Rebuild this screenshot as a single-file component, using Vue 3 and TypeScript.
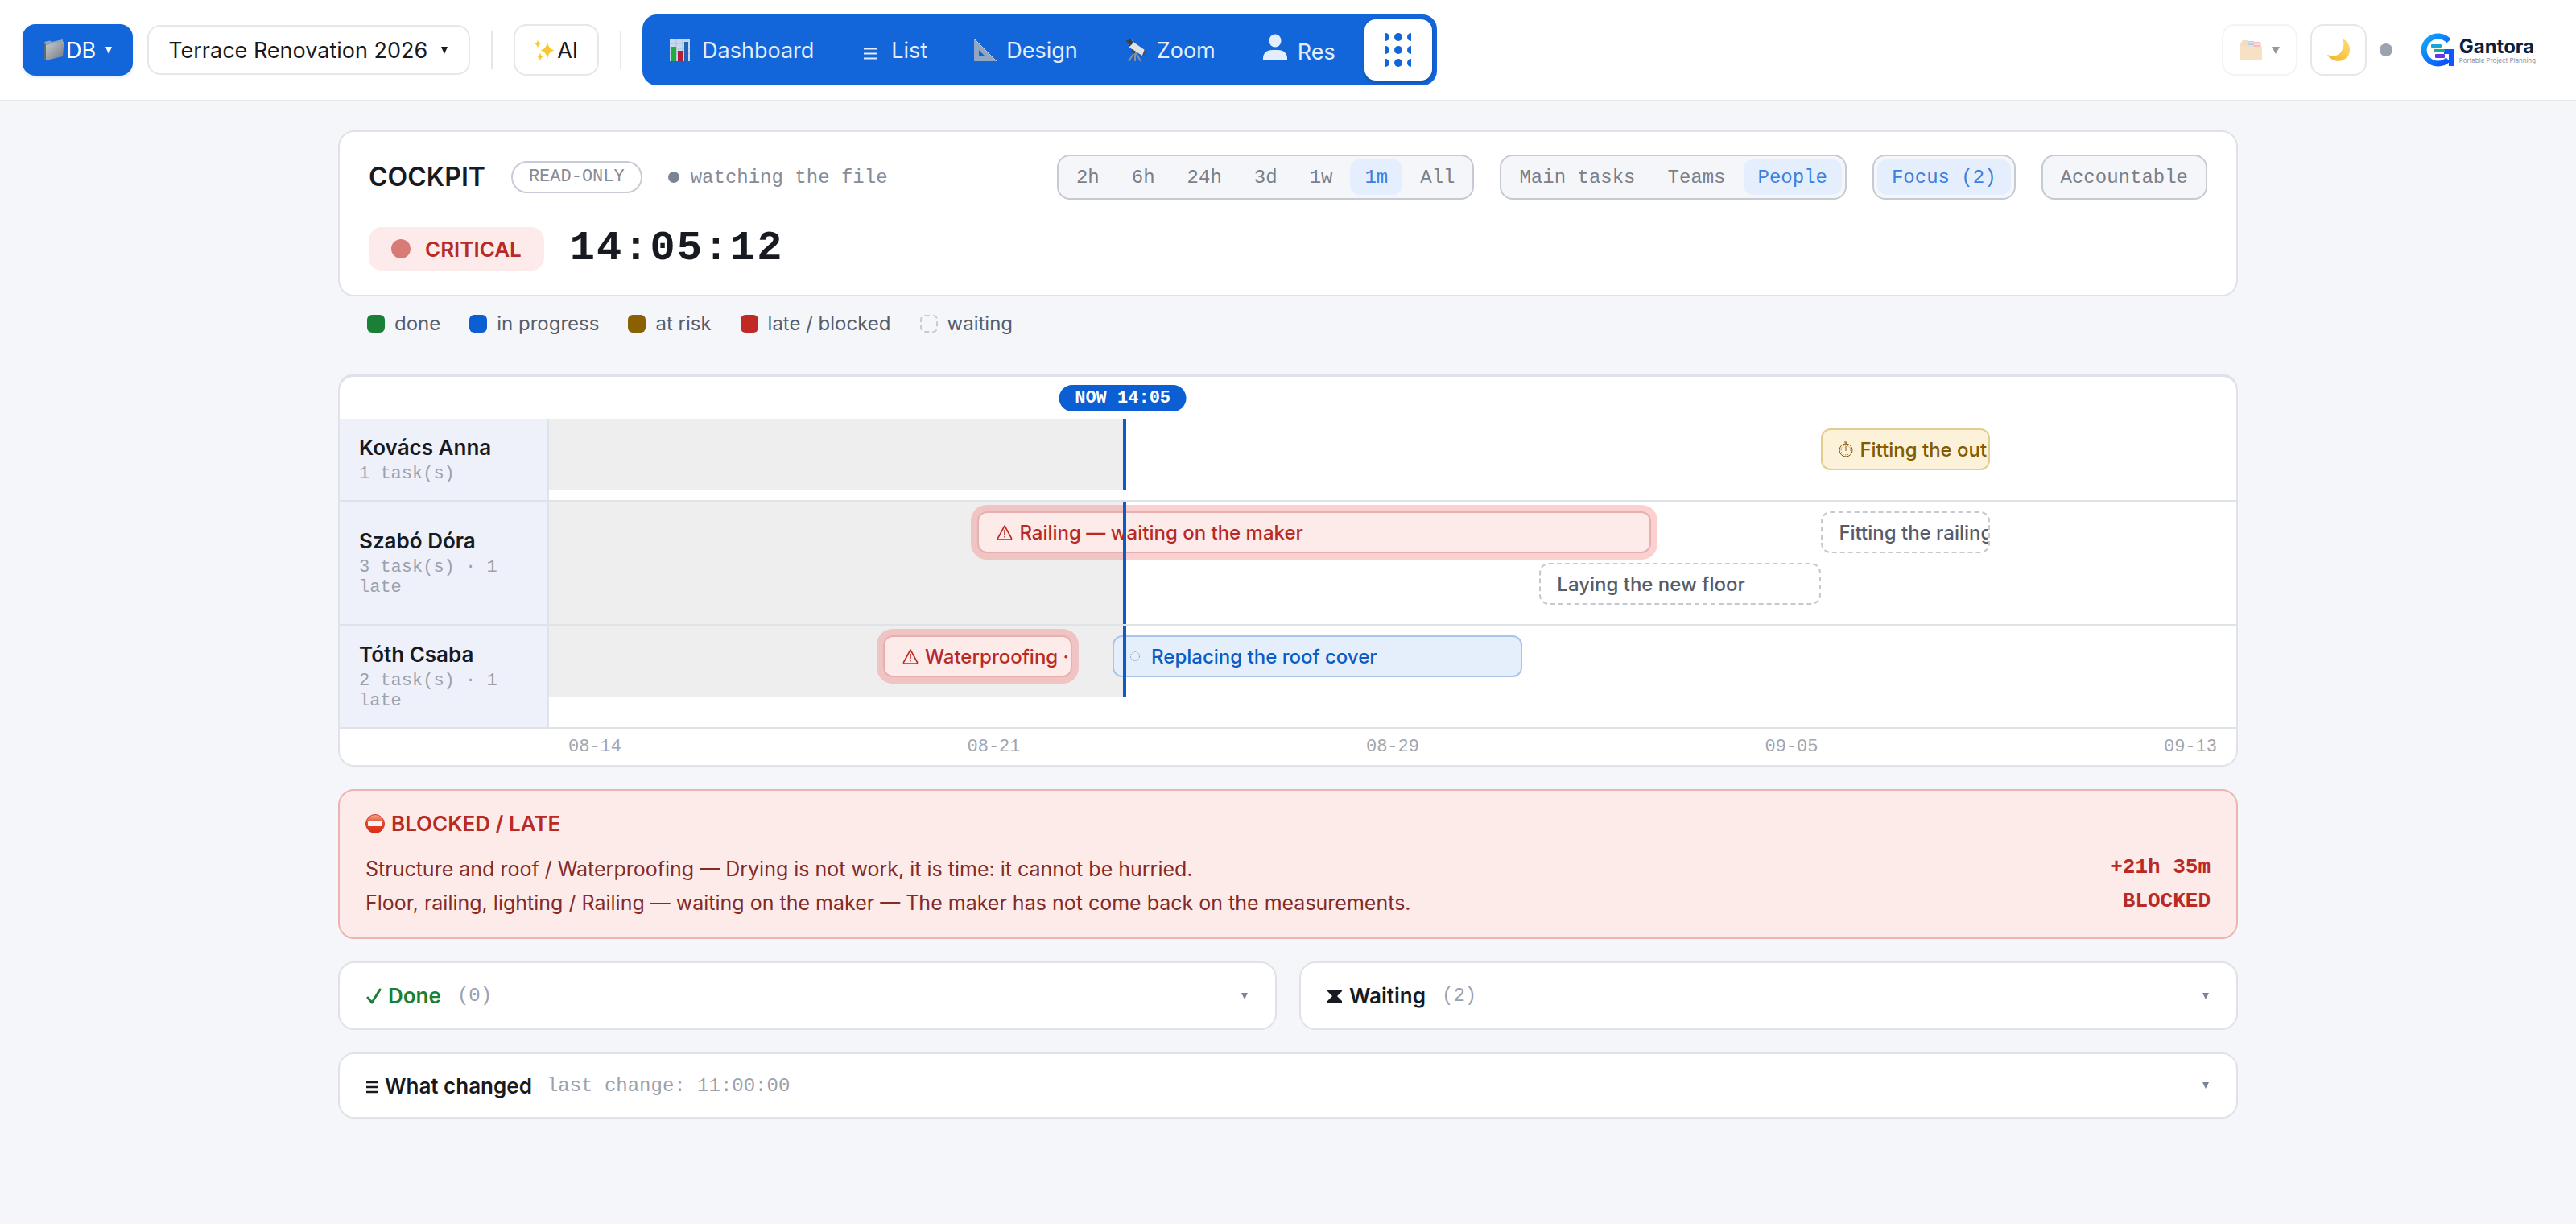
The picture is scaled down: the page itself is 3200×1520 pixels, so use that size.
<script setup lang="ts">
import { ref } from 'vue'

type Tone = 'late' | 'risk' | 'progress' | 'waiting'
interface Bar { label: string; tone: Tone; left: number; width: number; lane: number }
interface Row { name: string; note: string; lanes: number; bars: Bar[] }

const now = 34.1
const badge = 34
const project = ref('Terrace Renovation 2026')
const range = ref('1m')
const grouping = ref('People')

const nav = [
  { label: 'Dashboard', icon: 'chart' },
  { label: 'List', icon: 'list' },
  { label: 'Design', icon: 'ruler' },
  { label: 'Zoom', icon: 'scope' },
  { label: 'Res', icon: 'person' },
]
const ranges = ['2h', '6h', '24h', '3d', '1w', '1m', 'All']
const groupings = ['Main tasks', 'Teams', 'People']
const legend = [
  { label: 'done', cls: 'c-done' },
  { label: 'in progress', cls: 'c-progress' },
  { label: 'at risk', cls: 'c-risk' },
  { label: 'late / blocked', cls: 'c-late' },
  { label: 'waiting', cls: 'c-waiting' },
]
const rows: Row[] = [
  {
    name: 'Kovács Anna', note: '1 task(s)', lanes: 1,
    bars: [{ label: 'Fitting the out', tone: 'risk', left: 75.4, width: 10, lane: 0 }],
  },
  {
    name: 'Szabó Dóra', note: '3 task(s) · 1 late', lanes: 2,
    bars: [
      { label: 'Railing — waiting on the maker', tone: 'late', left: 25.4, width: 39.9, lane: 0 },
      { label: 'Fitting the railing', tone: 'waiting', left: 75.4, width: 10, lane: 0 },
      { label: 'Laying the new floor', tone: 'waiting', left: 58.7, width: 16.7, lane: 1 },
    ],
  },
  {
    name: 'Tóth Csaba', note: '2 task(s) · 1 late', lanes: 1,
    bars: [
      { label: 'Waterproofing ·', tone: 'late', left: 19.8, width: 11.2, lane: 0 },
      { label: 'Replacing the roof cover', tone: 'progress', left: 33.4, width: 24.3, lane: 0 },
    ],
  },
]
const ticks = ['08-14', '08-21', '08-29', '09-05', '09-13']
const issues = [
  { text: 'Structure and roof / Waterproofing — Drying is not work, it is time: it cannot be hurried.', value: '+21h 35m' },
  { text: 'Floor, railing, lighting / Railing — waiting on the maker — The maker has not come back on the measurements.', value: 'BLOCKED' },
]
</script>

<template>
  <div class="page">
    <header class="topbar">
      <button class="btn primary" type="button">
        <svg class="emoji" width="26" height="28" viewBox="0 0 26 28" aria-hidden="true">
          <defs>
            <linearGradient id="fold" x1="0" y1="0" x2="1" y2="1">
              <stop offset="0" stop-color="#c9cdd1" /><stop offset="1" stop-color="#70777f" />
            </linearGradient>
          </defs>
          <path d="M1 4 8 2.500l2 1.500L24 1v4L3 8z" fill="#8ea7b8" />
          <path d="M1 5v21l2 1V8z" fill="#5c6a76" />
          <path d="M3 8 25.500 3.500 24 22 3 27z" fill="url(#fold)" />
        </svg>
        <span>DB</span>
        <svg class="caret" width="8" height="9" viewBox="0 0 8 9" aria-hidden="true"><path d="M0 0h8L4 9z" /></svg>
      </button>
      <label class="project">
        <select v-model="project" aria-label="Project">
          <option>Terrace Renovation 2026</option>
        </select>
        <svg class="caret" width="8" height="9" viewBox="0 0 8 9" aria-hidden="true"><path d="M0 0h8L4 9z" /></svg>
      </label>
      <span class="sep"></span>
      <button class="btn" type="button">
        <svg class="emoji" width="26" height="28" viewBox="0 0 26 28" aria-hidden="true">
          <g fill="#fbc62f">
            <path d="M16 4q1.500 9 8.500 10.500Q17.500 16 16 25 14.500 16 7.500 14.500 14.500 13 16 4z" />
            <path d="M4 1q.6 4.500 3.500 5.500Q4.600 7.500 4 12 3.400 7.500.5 6.500 3.400 5.500 4 1z" />
            <path d="M7 17q.6 4.500 3.500 5.500Q7.600 23.500 7 28 6.400 23.500 3.500 22.500 6.400 21.500 7 17z" />
          </g>
        </svg>
        <span>AI</span>
      </button>
      <span class="sep"></span>

      <nav class="nav">
        <a v-for="item in nav" :key="item.label" href="#" :class="item.icon">
          <svg v-if="item.icon === 'chart'" width="28" height="30" viewBox="0 0 28 30" aria-hidden="true">
            <path d="M0 1h25v28H0z" fill="#c5d9ee" />
            <path d="M0 7h25M0 13h25M0 19h25M8 1v28M16 1v28" stroke="#a6bfda" fill="none" />
            <path d="M2 11h6v18H2z" fill="#1fae3c" /><path d="M10 16h6v13h-6z" fill="#b51f33" /><path d="M18 5h5v24h-5z" fill="#2263b8" />
          </svg>
          <svg v-else-if="item.icon === 'list'" width="26" height="30" viewBox="0 0 26 30" aria-hidden="true">
            <path d="M4 13.500h16M4 19.500h16M4 25.500h16" stroke="#e3edfb" stroke-width="2" />
          </svg>
          <svg v-else-if="item.icon === 'ruler'" width="28" height="30" viewBox="0 0 28 30" aria-hidden="true">
            <path fill-rule="evenodd" d="M0 1 28 29H0zM6 15v8h8z" fill="#93a6c1" />
            <path d="M0 1 28 29" stroke="#c4cedc" stroke-width="1" />
          </svg>
          <svg v-else-if="item.icon === 'scope'" width="28" height="30" viewBox="0 0 28 30" aria-hidden="true">
            <path d="M13 17 5 29M13 17l7 12M13 17v12" stroke="#8b9099" stroke-width="2" fill="none" />
            <path d="m3 3 5-2 4 5 13 9-3 7L6 12z" fill="#dfe3e8" />
            <path d="m2 3 6-2 3 5-5 5z" fill="#3b3f47" /><path d="m22 22 3-8 2 2-3 7z" fill="#4e535b" />
            <path d="m9 14 5 3-2 3-4-3z" fill="#454a52" />
          </svg>
          <svg v-else width="32" height="34" viewBox="0 0 32 34" aria-hidden="true">
            <ellipse cx="16" cy="8.500" rx="7.500" ry="8" fill="#e3edfb" />
            <path d="M1 33v-3c0-6 5-10 11-10h8c6 0 11 4 11 10v3z" fill="#e3edfb" />
          </svg>
          <span>{{ item.label }}</span>
        </a>
        <button class="grid-btn" type="button" aria-label="All views">
          <svg width="32" height="42" viewBox="0 0 32 42" fill="#1366d9" aria-hidden="true">
            <template v-for="y in [5, 21, 37]" :key="y">
              <circle v-for="x in [0, 16, 32]" :key="x" :cx="x" :cy="y" r="5" />
            </template>
          </svg>
        </button>
      </nav>

      <div class="right">
        <button class="btn faded" type="button" aria-label="Files">
          <svg width="28" height="28" viewBox="0 0 28 28" aria-hidden="true">
            <path d="M1 6 4 2h6l3 4h14v6H1z" fill="#e6b679" />
            <path d="M11 3h7v5h-7z" fill="#5f8fe8" /><path d="M18 4h8v6h-8z" fill="#e86a6a" />
            <path d="M11 5h7M18 7h8" stroke="#fff" />
            <path d="M0 9h12l2 1h14v17H0z" fill="#edbd80" />
          </svg>
          <svg class="caret" width="10" height="9" viewBox="0 0 10 9" aria-hidden="true"><path d="M0 0h10L5 9z" /></svg>
        </button>
        <button class="btn moon" type="button" aria-label="Dark mode">
          <svg width="30" height="30" viewBox="0 0 30 30" aria-hidden="true">
            <defs>
              <linearGradient id="moon" x1="0" y1="1" x2="1" y2="0">
                <stop offset="0" stop-color="#f2b320" /><stop offset="1" stop-color="#fde07a" />
              </linearGradient>
            </defs>
            <path d="M20 1c8 4 11 12 8 19-4 10-19 13-27 1 8 3 15 1 18-5 3-5 3-10 1-15z" fill="url(#moon)" />
          </svg>
        </button>
        <span class="dot"></span>
        <a class="logo" href="#" aria-label="Gantora">
          <svg width="44" height="42" viewBox="0 0 44 42" aria-hidden="true">
            <defs>
              <linearGradient id="ring" x1="0" y1="0" x2="1" y2="1">
                <stop offset="0" stop-color="#12a8f5" /><stop offset="1" stop-color="#0a4cff" />
              </linearGradient>
            </defs>
            <path d="M36 10A17.500 17 0 1 0 35 33" fill="none" stroke="url(#ring)" stroke-width="7" />
            <path d="M30 20h13v21h-7V26h-6z" fill="#0d59ff" />
            <rect x="14" y="14" width="13" height="4" rx="1" fill="#18a5d8" />
            <rect x="17" y="20" width="14" height="4" rx="1" fill="#16b08a" />
            <rect x="19" y="26" width="12" height="5" rx="1" fill="#6a35e8" />
          </svg>
          <span class="wordmark"><b>Gantora</b><small>Portable Project Planning</small></span>
        </a>
      </div>
    </header>

    <main class="content">
      <section class="card cockpit">
        <div class="line">
          <h1>COCKPIT</h1>
          <span class="pill">READ-ONLY</span>
          <span class="watch"><i></i>watching the file</span>
          <div class="filters">
            <div class="seg" role="group" aria-label="Range">
              <button v-for="r in ranges" :key="r" type="button" :class="{ on: r === range }" @click="range = r">{{ r }}</button>
            </div>
            <div class="seg" role="group" aria-label="Grouping">
              <button v-for="g in groupings" :key="g" type="button" :class="{ on: g === grouping }" @click="grouping = g">{{ g }}</button>
            </div>
            <div class="seg"><button type="button" class="on">Focus (2)</button></div>
            <div class="seg"><button type="button">Accountable</button></div>
          </div>
        </div>
        <div class="line status">
          <span class="critical"><i></i>CRITICAL</span>
          <time class="clock">14:05:12</time>
        </div>
      </section>

      <ul class="legend">
        <li v-for="l in legend" :key="l.label"><i :class="l.cls"></i>{{ l.label }}</li>
      </ul>

      <section class="card gantt">
        <div class="head">
          <div class="head-track"><span class="now-badge" :style="{ left: badge + '%' }">NOW 14:05</span></div>
        </div>
        <div v-for="row in rows" :key="row.name" class="row">
          <div class="who"><strong>{{ row.name }}</strong><span>{{ row.note }}</span></div>
          <div class="track">
            <div class="lanes" :class="{ two: row.lanes === 2 }">
              <div class="past" :style="{ width: now + '%' }"></div>
              <div
                v-for="bar in row.bars" :key="bar.label" class="bar"
                :class="[bar.tone, { second: bar.lane === 1 }]"
                :style="{ left: bar.left + '%', width: bar.width + '%' }"
              >
                <svg v-if="bar.tone === 'late'" width="22" height="20" viewBox="-2 0 22 20" aria-hidden="true">
                  <path d="M10 2 18.500 17.500q.3 1.500-1 1.500H2.500q-1.300 0-1-1.500z" fill="none" stroke="currentColor" stroke-width="1.600" stroke-linejoin="round" />
                  <path d="M10 7v6M10 14.700v1.800" stroke="currentColor" stroke-width="1.600" />
                </svg>
                <svg v-else-if="bar.tone === 'risk'" width="18" height="20" viewBox="0 0 18 20" aria-hidden="true">
                  <g fill="none" stroke="currentColor">
                    <circle cx="9" cy="11" r="8" /><path d="M9 1v3M7 1h4M9 6v6M15 3l2 2" />
                    <circle cx="9" cy="11" r="6" stroke-dasharray="1 2" />
                  </g>
                </svg>
                <svg v-else-if="bar.tone === 'progress'" class="wide" width="14" height="18" viewBox="0 0 14 18" aria-hidden="true">
                  <circle cx="6" cy="9" r="5.500" fill="none" stroke="#7ea6dc" stroke-dasharray="2 1" />
                </svg>
                <span>{{ bar.label }}</span>
              </div>
              <div class="now" :style="{ left: now + '%' }"></div>
            </div>
          </div>
        </div>
        <div class="axis"><span v-for="t in ticks" :key="t">{{ t }}</span></div>
      </section>

      <section class="card blocked">
        <h2>
          <svg width="24" height="26" viewBox="0 0 24 26" aria-hidden="true">
            <defs>
              <linearGradient id="stop" x1="0" y1="0" x2="0" y2="1">
                <stop offset="0" stop-color="#f7a68d" /><stop offset=".45" stop-color="#e2492c" /><stop offset="1" stop-color="#e0290f" />
              </linearGradient>
            </defs>
            <circle cx="12" cy="13" r="11.500" fill="url(#stop)" stroke="#c93a22" />
            <rect x="3" y="10" width="18" height="6" rx="1" fill="#f4f4f4" />
          </svg>
          BLOCKED / LATE
        </h2>
        <p v-for="i in issues" :key="i.value"><span>{{ i.text }}</span><b>{{ i.value }}</b></p>
      </section>

      <div class="pair">
        <details class="card fold tall">
          <summary>
            <svg class="green" width="20" height="22" viewBox="0 0 20 22" aria-hidden="true"><path d="M3 13l5 6L18 3" fill="none" stroke="currentColor" stroke-width="3" stroke-linecap="round" stroke-linejoin="round" /></svg>
            <strong class="green">Done</strong><span class="count">(0)</span>
            <svg class="caret" width="8" height="8" viewBox="0 0 8 8" aria-hidden="true"><path d="M0 0h8L4 8z" /></svg>
          </summary>
        </details>
        <details class="card fold tall">
          <summary>
            <svg width="20" height="22" viewBox="0 0 20 22" aria-hidden="true"><path d="M1 3h18v2l-6 6 6 6v3H1v-3l6-6-6-6z" fill="currentColor" /></svg>
            <strong>Waiting</strong><span class="count">(2)</span>
            <svg class="caret" width="8" height="8" viewBox="0 0 8 8" aria-hidden="true"><path d="M0 0h8L4 8z" /></svg>
          </summary>
        </details>
      </div>

      <details class="card fold">
        <summary>
          <svg width="16" height="22" viewBox="0 0 16 22" aria-hidden="true"><path d="M1 7h15M1 13h15M1 19h15" stroke="currentColor" stroke-width="2.500" /></svg>
          <strong>What changed</strong><span class="changed">last change: 11:00:00</span>
          <svg class="caret" width="8" height="8" viewBox="0 0 8 8" aria-hidden="true"><path d="M0 0h8L4 8z" /></svg>
        </summary>
      </details>
    </main>
  </div>
</template>

<style>
body { background: #f4f6fa; }
</style>

<style scoped>
* { box-sizing: border-box; }
.page {
  min-height: 100vh;
  font-family: Inter, "Liberation Sans", sans-serif;
  font-size: 24px;
  color: #171a21;
  background: #f4f6fa;
}
button, select { font: inherit; color: inherit; margin: 0; }
a { text-decoration: none; color: inherit; }

.topbar {
  display: flex;
  align-items: center;
  gap: 18px;
  padding: 18px 50px 18px 28px;
  background: #fff;
  border-bottom: 2px solid #e3e6ea;
}
.btn {
  display: flex;
  align-items: center;
  height: 64px;
  padding: 0 24px;
  border: 2px solid #e5e7eb;
  border-radius: 16px;
  background: #fff;
  font-size: 27px;
}
.btn .emoji { margin-right: 2px; }
.btn .caret { margin-left: 12px; fill: currentColor; }
.btn.primary { background: #1366d9; border-color: #1366d9; color: #fff; box-shadow: 0 2px 4px rgba(19, 102, 217, 0.15); }
.project { position: relative; display: flex; align-items: center; }
.project select {
  appearance: none;
  height: 62px;
  padding: 0 50px 0 24px;
  border: 2px solid #e5e7eb;
  border-radius: 16px;
  background: #fff;
  font-size: 27px;
}
.project .caret { position: absolute; right: 28px; fill: #171a21; pointer-events: none; }
.sep { width: 2px; height: 48px; margin: 0 8px; background: #e5e7eb; }
.nav {
  display: flex;
  align-items: center;
  gap: 2px;
  height: 88px;
  padding: 0 6px;
  border-radius: 18px;
  background: #1366d9;
  color: #e3edfb;
  font-size: 27px;
}
.nav a { display: flex; align-items: center; gap: 12px; padding: 0 28px; }
.nav .person svg { margin-top: -6px; }
.nav .person span { margin-top: 4px; }
.grid-btn {
  display: grid;
  place-items: center;
  width: 84px;
  height: 76px;
  margin-left: 6px;
  border: 0;
  border-radius: 14px;
  background: #fff;
  box-shadow: 0 2px 4px rgba(0, 0, 0, 0.25);
}
.right { display: flex; align-items: center; gap: 16px; margin-left: auto; }
.btn.faded { opacity: 0.45; padding: 0 20px; }
.btn.moon { padding: 0 18px; }
.dot { width: 16px; height: 16px; border-radius: 50%; background: #9ca3af; }
.logo { display: flex; align-items: center; gap: 5px; margin-left: 18px; }
.wordmark { display: flex; flex-direction: column; color: #0b1f44; }
.wordmark b { font-size: 24px; line-height: 26px; }
.wordmark small { font-size: 8px; line-height: 8px; color: #8a94a6; }

.content {
  display: flex;
  flex-direction: column;
  gap: 28px;
  max-width: 2360px;
  margin: 0 auto;
  padding: 36px 0 48px;
}
.card { border: 2px solid #dfe3e9; border-radius: 20px; background: #fff; }
.cockpit { display: flex; flex-direction: column; gap: 32px; padding: 28px 36px; }
.line { display: flex; align-items: center; gap: 32px; height: 56px; }
h1 { margin: 0; font-size: 32px; font-weight: 600; line-height: 38px; }
.pill, .watch, .seg, .clock, .count, .changed, .axis, .now-badge, .who span, .blocked b {
  font-family: "Liberation Mono", monospace;
}
.pill {
  padding: 4px 20px;
  border: 2px solid #c6cbd6;
  border-radius: 20px;
  font-size: 22px;
  line-height: 28px;
  color: #868c97;
}
.watch { display: flex; align-items: center; gap: 14px; font-size: 24px; color: #868c97; }
.watch i { width: 14px; height: 14px; border-radius: 50%; background: #7b8494; }
.filters { display: flex; gap: 32px; margin-left: auto; }
.seg {
  display: flex;
  gap: 4px;
  padding: 4px;
  border: 2px solid #c6cad2;
  border-radius: 16px;
  background: #f4f6fa;
}
.seg button {
  height: 44px;
  padding: 0 18px;
  border: 0;
  border-radius: 12px;
  background: transparent;
  font-size: 24px;
  color: #7a7f88;
}
.seg button.on { background: #e4eefc; color: #3b80de; }
.line.status { height: 58px; }
.critical {
  display: flex;
  align-items: center;
  gap: 18px;
  height: 54px;
  padding: 0 28px;
  border-radius: 16px;
  background: #fdeaea;
  color: #b92a25;
  font-size: 26px;
  font-weight: 600;
}
.critical i { width: 24px; height: 24px; border-radius: 50%; background: #d87b77; }
.clock { font-size: 52px; line-height: 58px; font-weight: 700; letter-spacing: 2px; }

.legend {
  display: flex;
  gap: 36px;
  margin: -8px 0 20px;
  padding: 0 36px;
  list-style: none;
  color: #565e6b;
  line-height: 28px;
}
.legend li { display: flex; align-items: center; gap: 12px; }
.legend i { width: 22px; height: 22px; border-radius: 6px; }
.c-done { background: #1a7f37; }
.c-progress { background: #0b5fd3; }
.c-risk { background: #8a6100; }
.c-late { background: #c02a25; }
.c-waiting { border: 2px dashed #c6cad2; }

.gantt { border-top-width: 4px; overflow: hidden; }
.head { height: 52px; padding-left: 260px; }
.head-track { position: relative; height: 52px; }
.now-badge {
  position: absolute;
  top: 10px;
  transform: translateX(-50%);
  padding: 0 20px;
  border-radius: 18px;
  background: #0b5fd3;
  color: #fff;
  font-size: 22px;
  font-weight: 700;
  line-height: 33px;
  white-space: nowrap;
}
.row { display: flex; border-bottom: 2px solid #dfe2e7; }
.who {
  display: flex;
  flex-direction: column;
  justify-content: center;
  gap: 4px;
  flex: 0 0 260px;
  padding: 20px 24px;
  border-right: 2px solid #dfe3ea;
  background: #eef1f9;
}
.who strong { font-size: 26px; font-weight: 600; line-height: 32px; }
.who span { font-size: 22px; line-height: 25px; color: #9ba1ad; }
.track { flex: 1; }
.lanes { position: relative; height: 88px; }
.lanes.two { height: 152px; }
.past { height: 100%; background: #eeeeee; }
.now { position: absolute; top: 0; bottom: 0; width: 4px; margin-left: -2px; background: #0b5cc4; }
.bar {
  position: absolute;
  top: 12px;
  display: flex;
  align-items: center;
  gap: 8px;
  height: 52px;
  padding: 0 20px;
  border: 2px solid;
  border-radius: 12px;
  overflow: hidden;
  font-weight: 500;
  white-space: nowrap;
}
.bar.second { top: 76px; }
.bar svg { flex: none; }
.bar svg.wide { margin-right: 4px; }
.bar.late { color: #b92a25; background: #fdebea; border-color: #e6b0b0; box-shadow: 0 0 0 8px rgba(250, 100, 100, 0.3); }
.bar.risk { color: #805b00; background: #fcf2da; border-color: #e2cd8e; }
.bar.progress { color: #0b5cc4; background: #e5effb; border-color: #a9c5ec; }
.bar.waiting { color: #565c68; border: 2px dashed #c6c9cf; }
.axis {
  display: flex;
  justify-content: space-between;
  margin-left: 260px;
  padding: 10px 24px;
  font-size: 22px;
  line-height: 25px;
  color: #a0a5af;
}

.blocked { padding: 24px 32px 22px; border-color: #edb3b3; background: #fdebea; font-size: 26px; line-height: 42px; }
.blocked h2 {
  display: flex;
  align-items: center;
  gap: 8px;
  margin: 0 0 18px;
  font-size: 26px;
  font-weight: 600;
  line-height: 34px;
  color: #b92a25;
}
.blocked p { display: flex; justify-content: space-between; margin: 0; color: #832b28; }
.blocked p span { font-size: 25px; }
.blocked b { line-height: 38px; color: #b92a25; }

.pair { display: grid; grid-template-columns: 1fr 1fr; gap: 28px; }
.fold summary {
  display: flex;
  align-items: center;
  height: 78px;
  padding: 0 34px 0 32px;
  list-style: none;
  cursor: pointer;
}
.fold.tall summary { height: 81px; }
.fold strong { margin-left: 8px; font-size: 26px; font-weight: 600; }
.fold .caret { margin-left: auto; fill: #7b8494; }
.green { color: #1a7f37; }
.count { margin-left: 20px; color: #9ba1ad; }
.changed { margin-left: 18px; color: #9ba1ad; }
</style>
